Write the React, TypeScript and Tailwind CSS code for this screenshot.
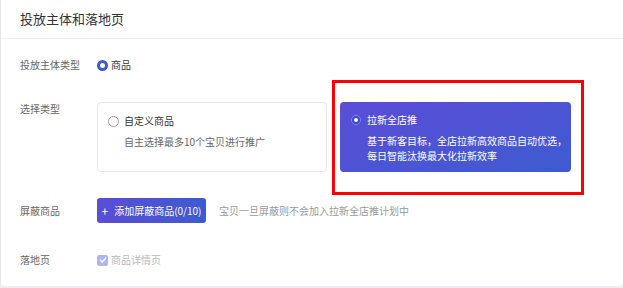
import React from "react";

const FONT = { fontFamily: '"Noto Sans CJK SC", "Noto Sans", sans-serif' };

function Row({ label, children, className = "" }: { label: string; children: React.ReactNode; className?: string }) {
  return (
    <div className={`flex ${className}`}>
      <div className="w-[96px] shrink-0 whitespace-nowrap pl-[19px] text-[10px] leading-[14px] text-[#666]">{label}</div>
      <div className="flex-1 min-w-0">{children}</div>
    </div>
  );
}

export default function App() {
  return (
    <div className="h-[288px] w-[623px] bg-[#eceef2]" style={FONT}>
      <div className="h-[286px] rounded-b-[4px] border-l border-[#e6e7eb] bg-white">
        <div className="flex h-[39px] items-center border-b border-[#eeeff2] pl-[19px] pb-px text-[13px] text-[#333]">
          投放主体和落地页
        </div>

        <div className="pt-[16px]">
          <Row label="投放主体类型" className="items-center h-[20px]">
            <div className="flex items-center gap-[3px]">
              <span className="h-[11px] w-[11px] rounded-full border-[3px] border-[#3d55d6] bg-white" />
              <span className="text-[10px] leading-[14px] text-[#333]">商品</span>
            </div>
          </Row>

          <Row label="选择类型" className="mt-[27px] items-start">
            <div className="flex gap-[13px]">
              <div className="h-[70px] w-[230px] rounded-[4px] border border-[#e6e7ec] bg-white pl-[10px] pt-[11px]">
                <div className="flex items-center gap-[5px] h-[14px]">
                  <span className="h-[11px] w-[11px] rounded-full border border-[#9a9ca3] bg-white" />
                  <span className="text-[10px] leading-[14px] text-[#333]">自定义商品</span>
                </div>
                <div className="mt-[6px] pl-[16px] text-[10px] leading-[15px] text-[#666]">自主选择最多10个宝贝进行推广</div>
              </div>

              <div className="relative h-[70px] w-[231px]">
                <div className="absolute -left-[8px] -top-[22px] -right-[13px] -bottom-[23px] border-[3px] border-[#ff0000]" />
                <div className="relative h-full w-full rounded-[4px] bg-gradient-to-br from-[#5b4cd8] to-[#3c5bd0] pl-[11px] pt-[11px]">
                  <div className="flex items-center gap-[6px] h-[14px]">
                    <span className="flex h-[10px] w-[10px] items-center justify-center rounded-full border border-[#7d8ae8] bg-[#3347c9]">
                      <span className="h-[4px] w-[4px] rounded-full bg-white" />
                    </span>
                    <span className="text-[10px] leading-[14px] text-white">拉新全店推</span>
                  </div>
                  <div className="mt-[6px] pl-[16px] text-[10px] leading-[15px] text-white">
                    基于新客目标，全店拉新高效商品自动优选，
                    <br />
                    每日智能汰换最大化拉新效率
                  </div>
                </div>
              </div>
            </div>
          </Row>

          <Row label="屏蔽商品" className="mt-[26px] items-center">
            <div className="flex items-center gap-[13px]">
              <button className="flex h-[25px] w-[109px] items-center justify-center rounded-[3px] bg-gradient-to-r from-[#5a4dd7] to-[#3d5ad0] text-[10px] text-white whitespace-nowrap">
                <span className="text-[12px] leading-none">+</span>
                <span className="ml-[6px]">添加屏蔽商品(0/10)</span>
              </button>
              <span className="text-[10px] text-[#999]">宝贝一旦屏蔽则不会加入拉新全店推计划中</span>
            </div>
          </Row>

          <Row label="落地页" className="mt-[27px] items-center h-[20px]">
            <div className="flex items-center gap-[3px]">
              <span className="flex h-[11px] w-[11px] items-center justify-center rounded-[2px] bg-[#abb7ee]">
                <svg width="8" height="8" viewBox="0 0 8 8" fill="none">
                  <path d="M1.3 4.1 3.2 6 6.8 2" stroke="white" strokeWidth="1.3" strokeLinecap="round" strokeLinejoin="round" />
                </svg>
              </span>
              <span className="text-[10px] leading-[14px] text-[#b8b8bd]">商品详情页</span>
            </div>
          </Row>
        </div>
      </div>
    </div>
  );
}
